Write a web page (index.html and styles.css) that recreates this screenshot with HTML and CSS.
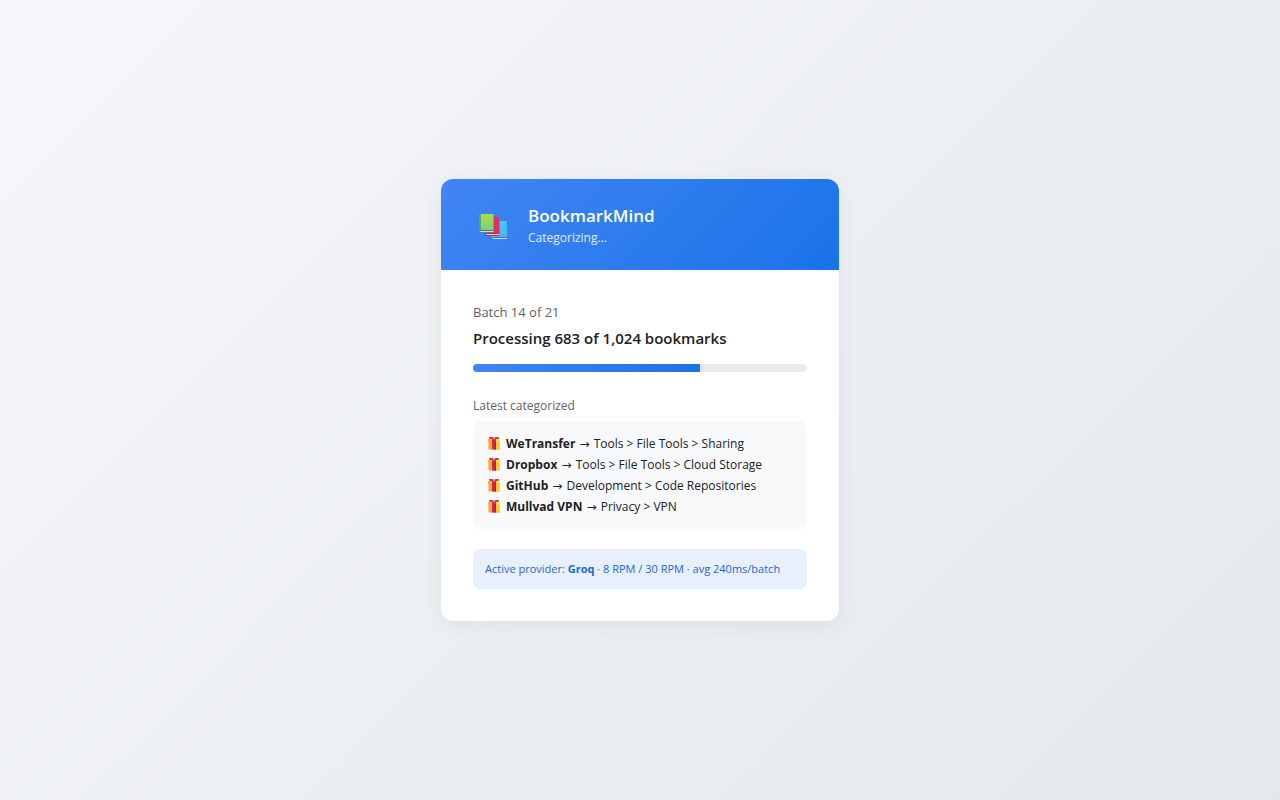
FILE: index.html
```html
<!DOCTYPE html>
<html lang="en">
<head>
    <meta charset="utf-8">
    <meta name="viewport" content="width=device-width, initial-scale=1">
    <title>BookmarkMind</title>
    <link rel="stylesheet" href="styles.css">
</head>
<body>
    <!-- Gift icon, reused by every row of the list -->
    <svg width="0" height="0" class="sprite" aria-hidden="true">
        <symbol id="gift" viewBox="0 0 14 14">
            <rect x="1.500" y="4" width="11" height="9.500" fill="#f6a437"/>
            <rect x="9" y="4" width="3.500" height="9.500" fill="#fbc930"/>
            <rect x="1" y="3" width="12" height="3" fill="#fbb03a"/>
            <rect x="9" y="3" width="4" height="3" fill="#ffd93c"/>
            <rect x="5" y="3" width="4" height="10.500" fill="#d3284c"/>
            <rect x="7.500" y="5" width="1.500" height="8.500" fill="#a3225c"/>
            <path d="M2 1h3.500l1.500 1 1.500-1H12l-.5 2h-9z" fill="#dd3350"/>
            <path d="M6 2h2v1.500H6z" fill="#f06a78"/>
        </symbol>
    </svg>

    <main class="card">
        <header class="card-header">
            <svg class="logo" viewBox="0 -2 40 40" aria-hidden="true">
                <defs>
                    <linearGradient id="green" x1="0" y1="0" x2="0" y2="1">
                        <stop offset="0" stop-color="#a8db4c"/>
                        <stop offset="1" stop-color="#6fd08c"/>
                    </linearGradient>
                    <linearGradient id="blue" x1="0" y1="0" x2="1" y2="1">
                        <stop offset="0" stop-color="#55d0f5"/>
                        <stop offset="1" stop-color="#3db4ee"/>
                    </linearGradient>
                </defs>
                <path d="M21 14h13v18H21l-2-1V15z" fill="url(#blue)"/>
                <path d="M20 30h14v2H20z" fill="#3d6fae"/>
                <path d="M20 31h14v1H20z" fill="#d4d4ee"/>
                <path d="M14 10h12.500v18.500H14l-2-1V11z" fill="#e62f60"/>
                <path d="M12 26h14.500v3H12z" fill="#b02a66"/>
                <path d="M13 27h13.500v1H13z" fill="#f3c9da"/>
                <path d="M7 7h13.500v18.500H7l-1-.5V7.500z" fill="url(#green)"/>
                <path d="M6 7h2v18H6z" fill="#56ad4a"/>
                <path d="M6 23h14.500v2.500H6z" fill="#397f70"/>
                <path d="M6.500 24h14v1h-14z" fill="#d4d8e4"/>
            </svg>
            <div>
                <h1 class="title">BookmarkMind</h1>
                <p class="status">Categorizing...</p>
            </div>
        </header>

        <div class="card-body">
            <p class="batch">Batch 14 of 21</p>
            <h2 class="processing">Processing 683 of 1,024 bookmarks</h2>
            <div class="progress" role="progressbar" aria-label="Bookmarks processed" aria-valuemin="0" aria-valuemax="100" aria-valuenow="68">
                <div class="progress-fill" style="width: 68%"></div>
            </div>

            <h3 class="latest-title">Latest categorized</h3>
            <ul class="latest">
                <li><svg class="gift" aria-hidden="true"><use href="#gift"/></svg><strong>WeTransfer</strong> <span class="arrow">→</span> Tools &gt; File Tools &gt; Sharing</li>
                <li><svg class="gift" aria-hidden="true"><use href="#gift"/></svg><strong>Dropbox</strong> <span class="arrow">→</span> Tools &gt; File Tools &gt; Cloud Storage</li>
                <li><svg class="gift" aria-hidden="true"><use href="#gift"/></svg><strong>GitHub</strong> <span class="arrow">→</span> Development &gt; Code Repositories</li>
                <li><svg class="gift" aria-hidden="true"><use href="#gift"/></svg><strong>Mullvad VPN</strong> <span class="arrow">→</span> Privacy &gt; VPN</li>
            </ul>

            <p class="provider">Active provider: <strong>Groq</strong> · 8 RPM / 30 RPM · avg 240ms/batch</p>
        </div>
    </main>
</body>
</html>
```

FILE: styles.css
```css
* {
    box-sizing: border-box;
    margin: 0;
    padding: 0;
}

body {
    display: flex;
    align-items: center;
    justify-content: center;
    min-height: 100vh;
    font-family: "Segoe UI", "Open Sans", "Noto Sans", sans-serif;
    font-size: 13px;
    color: #202124;
    background: linear-gradient(135deg, #f5f7fa, #e4e8ec);
}

.sprite {
    position: absolute;
}

.card {
    width: 100%;
    max-width: 398px;
    border-radius: 12px;
    overflow: hidden;
    background: #fff;
    box-shadow: 0 4px 20px rgba(60, 64, 67, 0.08);
}

.card-header {
    display: flex;
    align-items: center;
    gap: 15px;
    padding: 24px 32px;
    color: #fff;
    background: linear-gradient(135deg, #4285f4, #1a73e8);
}

.logo {
    width: 40px;
    height: 40px;
}

.title {
    font-size: 17px;
    font-weight: 600;
    line-height: 25px;
}

.status {
    margin-top: 2px;
    font-size: 12px;
    line-height: 16px;
    opacity: 0.85;
}

.card-body {
    padding: 32px;
}

.batch {
    line-height: 20px;
    color: #5f6368;
}

.processing {
    margin: 5px 0 14px;
    font-size: 15px;
    font-weight: 600;
    line-height: 23px;
}

.progress {
    height: 8px;
    border-radius: 4px;
    overflow: hidden;
    background: #e8eaed;
}

.progress-fill {
    height: 100%;
    background: linear-gradient(90deg, #4285f4, #1a73e8);
}

.latest-title {
    margin: 25px 0 6px;
    font-size: 12px;
    font-weight: 400;
    line-height: 18px;
    color: #5f6368;
}

.latest {
    padding: 12px 14px;
    border-radius: 8px;
    list-style: none;
    font-size: 12px;
    line-height: 21px;
    background: #f8f9fb;
}

.gift {
    width: 14px;
    height: 14px;
    margin-right: 5px;
    vertical-align: -2px;
}

.arrow {
    padding: 0 1px;
    font-family: "Segoe UI", "DejaVu Sans", sans-serif;
    line-height: 1;
}

.provider {
    margin-top: 20px;
    padding: 12px;
    border-radius: 8px;
    font-size: 11px;
    line-height: 16px;
    color: #1967d2;
    background: #e8f0fe;
}
```
